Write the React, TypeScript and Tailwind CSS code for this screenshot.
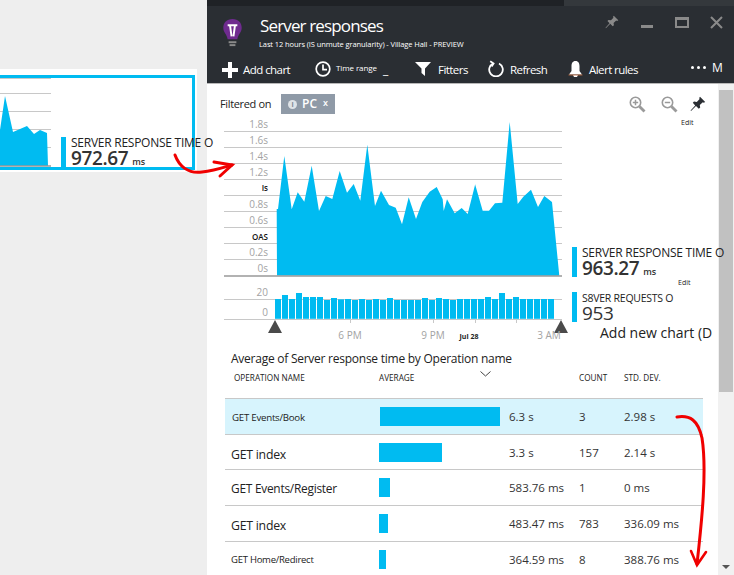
import React from "react";

const font = "font-['Open_Sans','Noto_Sans',sans-serif]";

const zoomA = [[185,297],[189,297],[208,138],[230,298],[248,247],[268,275],[290,167],[312,303],[332,258],[352,267],[374,183],[396,248],[416,222],[436,272],[457,104],[480,288],[498,242],[522,285],[542,293],[561,343],[581,262],[603,327],[622,276],[644,245],[665,231],[683,268],[686,303],[696,268],[719,310],[740,294],[758,312],[780,225]];
const zoomB = [[15,222],[38,302],[57,302],[75,280],[97,278],[119,36],[143,282],[160,260],[183,239],[204,291],[223,258],[246,276],[268,497]];
const areaPts = [
  "277,275.5",
  ...zoomA.map(([x, y]) => `${(215 + x / 3).toFixed(1)},${(110 + y / 3).toFixed(1)}`),
  ...zoomB.map(([x, y]) => `${(470 + x / 3).toFixed(1)},${(110 + y / 3).toFixed(1)}`),
].join(" ");

const barTops = [72,60,72,54,66,66,66,75,69,73,72,75,72,75,72,75,69,75,75,75,75,69,75,69,72,75,72,72,72,72,66,72,54,72,66,72,72,72,72,72];

const yLabels: [string, number, boolean][] = [
  ["1.8s", 125, false],["1.6s", 141, false],["1.4s", 157, false],["1.2s", 173, false],["Is", 189, true],
  ["0.8s", 205, false],["0.6s", 221, false],["OAS", 238, true],["0.2s", 253, false],["0s", 269, false],
];

function MainChart() {
  return (
    <svg width={350} height={230} viewBox="222 115 350 230" className="shrink-0 block">
      {[131,147,163,179,195,211,227,243,259].map((y) => (
        <line key={y} x1={224} x2={562} y1={y + 0.5} y2={y + 0.5} stroke="#c8c8c8" />
      ))}
      <polygon points={areaPts} fill="#00bbf1" />
      <line x1={224} x2={562} y1={276} y2={276} stroke="#999" strokeWidth={1.5} />
      {yLabels.map(([t, y, b]) => (
        <text key={t} x={268} y={y} textAnchor="end" dominantBaseline="middle" fontSize={b ? 8 : 10} fontWeight={b ? 600 : 400} fill={b ? "#111" : "#a3a3a3"} fontFamily="Open Sans">{t}</text>
      ))}
      <text x={268} y={293} textAnchor="end" dominantBaseline="middle" fontSize={10} fill="#a3a3a3" fontFamily="Open Sans">20</text>
      <text x={268} y={313} textAnchor="end" dominantBaseline="middle" fontSize={10} fill="#a3a3a3" fontFamily="Open Sans">0</text>
      <line x1={224} x2={562} y1={299.5} y2={299.5} stroke="#c8c8c8" />
      {barTops.map((t, i) => {
        const y = 275 + t / 3;
        return <rect key={i} x={275 + i * 7} y={y} width={6} height={318.8 - y} fill="#00bbf1" />;
      })}
      <line x1={224} x2={562} y1={319.5} y2={319.5} stroke="#c8c8c8" />
      {[350, 433, 475, 516].map((x) => (
        <line key={x} x1={x + 0.5} x2={x + 0.5} y1={319} y2={323} stroke="#c8c8c8" />
      ))}
      <polygon points="275,320 268,333 282,333" fill="#4a4a4a" />
      <polygon points="561,320 554,333 568,333" fill="#4a4a4a" />
      <text x={350} y={339} textAnchor="middle" fontSize={10} fill="#a3a3a3" fontFamily="Open Sans">6 PM</text>
      <text x={433} y={339} textAnchor="middle" fontSize={10} fill="#a3a3a3" fontFamily="Open Sans">9 PM</text>
      <text x={469} y={339} textAnchor="middle" fontSize={7} fontWeight={700} fill="#222" fontFamily="Open Sans">Jul 28</text>
      <text x={549} y={339} textAnchor="middle" fontSize={10} fill="#a3a3a3" fontFamily="Open Sans">3 AM</text>
    </svg>
  );
}

function MiniChart() {
  return (
    <svg width={52} height={89} viewBox="0 78 52 89" className="shrink-0 block">
      {[78,93,111,129,147].map((y) => (
        <line key={y} x1={0} x2={51} y1={y + 0.5} y2={y + 0.5} stroke="#c8c8c8" />
      ))}
      <polygon points="0,130 5,96 13,132 20,129 27,126 34,134 40,130 47,133 48,166 0,166" fill="#00bbf1" />
      <line x1={0} x2={51} y1={166} y2={166} stroke="#999" strokeWidth={1.5} />
    </svg>
  );
}

function PinIcon({ color, size = 16 }: { color: string; size?: number }) {
  return (
    <svg width={size} height={size} viewBox="0 0 16 16" fill={color} className="shrink-0">
      <path d="M10 0.8 L15.2 6 L13.8 6.8 L12.8 6.2 L9.8 9 L10.2 11.6 L8.8 12.8 L6 10 L1 15 L0.6 14.6 L5.2 9.4 L2.8 6.8 L4 5.6 L6.8 6 L9.6 3 L9.2 2 Z" />
    </svg>
  );
}

function ZoomIcon({ plus }: { plus: boolean }) {
  return (
    <svg width={17} height={17} viewBox="0 0 17 17" fill="none" stroke="#9a9a9a">
      <circle cx={6.5} cy={6.5} r={5.2} strokeWidth={1.6} />
      <path d="M10.5 10.5 L15.5 15.5" strokeWidth={2.8} />
      <path d={plus ? "M3.8 6.5H9.2M6.5 3.8V9.2" : "M3.8 6.5H9.2"} strokeWidth={1.5} />
    </svg>
  );
}

function Tool({ icon, label, className }: { icon: React.ReactNode; label: string; className: string }) {
  return (
    <div className={`flex items-center ${className}`}>
      {icon}
      <span className="text-white text-[11.5px] leading-none whitespace-nowrap tracking-[-0.55px]">{label}</span>
    </div>
  );
}

function Header() {
  return (
    <div className="h-[84px] shrink-0 bg-[#2a2e33] border-b border-[#b8b8b8] flex flex-col">
      <div className="h-[6px] flex">
        <div className="w-[357px] bg-[#1f2226]" />
        <div className="flex-1 bg-[#34383c]" />
      </div>
      <div className="h-[46px] flex">
        <div className="w-[53px] pl-[15px] pt-[12px]">
          <svg width={21} height={31} viewBox="0 0 21 32">
            <path d="M10.5 1 C4.5 1 1 5 1 10 C1 15 5 17 5.5 22 L15.5 22 C16 17 20 15 20 10 C20 5 16.5 1 10.5 1 Z" fill="#6f2b8f" />
            <path d="M5.5 7.5 H15.5 M8 8 L9.5 19 M13 8 L11.5 19" stroke="#fff" strokeWidth={2} fill="none" />
            <rect x={6.5} y={24} width={8} height={2} fill="#8a8a8a" />
            <rect x={7.5} y={27} width={6} height={2} fill="#8a8a8a" />
          </svg>
        </div>
        <div className="flex-1 pt-[9px]">
          <div className="text-white text-[17px] leading-[22px] tracking-[-0.85px] whitespace-nowrap">Server responses</div>
          <div className="text-white text-[7.5px] leading-[10px] mt-[2px] tracking-[-0.1px] whitespace-nowrap -ml-[1px]">
            Last 12 hours (IS unmute granularity) - Village Hall - PREVIEW
          </div>
        </div>
        <div className="flex items-start pt-[9px] pr-[11px]">
          <PinIcon color="#8a8a8a" size={14} />
          <div className="w-[12px] h-[3px] bg-[#8a8a8a] ml-[22px] mt-[10px]" />
          <div className="w-[14px] h-[11px] border-2 border-t-[3px] border-[#8a8a8a] ml-[22px] mt-[2px]" />
          <svg width={13} height={13} viewBox="0 0 13 13" className="ml-[21px] mt-[1px]" stroke="#8a8a8a" strokeWidth={2}>
            <path d="M1 1L12 12M12 1L1 12" />
          </svg>
        </div>
      </div>
      <div className="flex-1 flex items-center pt-[4px]">
        <Tool className="ml-[15px] w-[93px] gap-[5px]" label="Add chart" icon={
          <svg width={16} height={16} viewBox="0 0 16 16" fill="#fff"><path d="M6 0H10V6H16V10H10V16H6V10H0V6H6Z" /></svg>
        } />
        <div className="flex items-center w-[100px]">
          <svg width={16} height={16} viewBox="0 0 16 16" fill="none" stroke="#fff" strokeWidth={1.7} className="-mt-[2px]">
            <circle cx={8} cy={8} r={6.8} /><path d="M8 3.5V8.6H12" />
          </svg>
          <span className="text-white text-[8px] ml-[5px] -mt-[4px] whitespace-nowrap tracking-[-0.1px]">Time range</span>
          <span className="text-white text-[12px] ml-[6px] leading-none mt-[1px]">_</span>
        </div>
        <Tool className="w-[73px] gap-[7px]" label="Fitters" icon={
          <svg width={16} height={14} viewBox="0 0 16 14" fill="#fff" className="-mt-[2px]"><path d="M0 0H16L10 6.5V14L6.5 11V6.5Z" /></svg>
        } />
        <Tool className="w-[80px] gap-[6px]" label="Refresh" icon={
          <svg width={16} height={17} viewBox="0 0 16 17" fill="none" stroke="#fff" strokeWidth={1.8} className="-mt-[2px]">
            <path d="M5 3.5 A6.8 6.8 0 1 0 11 3.5" /><path d="M2.2 1.2 L5.6 3.4 L3.6 6.6" />
          </svg>
        } />
        <Tool className="w-[123px] gap-[6px]" label="Alert rules" icon={
          <svg width={15} height={16} viewBox="0 0 15 16" className="-mt-[2px]">
            <path d="M7.5 0 C4.5 0 3.5 2.5 3.5 5 L3.5 10 L1 13.5 L14 13.5 L11.5 10 L11.5 5 C11.5 2.5 10.5 0 7.5 0 Z M5 14 H10 L9 16 H6Z" fill="#fff" />
            <path d="M0.5 14 H14.5" stroke="#c8693a" strokeWidth={0.8} />
          </svg>
        } />
        <div className="flex items-center gap-[3px] -mt-[4px]">
          <span className="w-[3px] h-[3px] rounded-full bg-white" />
          <span className="w-[3px] h-[3px] rounded-full bg-white" />
          <span className="w-[3px] h-[3px] rounded-full bg-white" />
          <span className="text-white text-[12px] leading-none ml-[3px]">M</span>
        </div>
      </div>
    </div>
  );
}

function Legend({ title, value, unit, small }: { title: string; value: string; unit?: string; small?: boolean }) {
  return (
    <div className="flex h-[30px] gap-[5px]">
      <div className="w-[5px] bg-[#00bbf1] shrink-0" />
      <div className="flex flex-col whitespace-nowrap">
        <div className={`${small ? "text-[10.5px]" : "text-[12px]"} leading-[12px] tracking-[-0.25px] text-[#222]`}>{title}</div>
        <div className={`text-[19px] leading-[20px] ${small ? "font-normal" : "font-semibold"} text-[#333] -mt-[1px] tracking-[-0.4px]`}>
          {value}
          {unit && <span className="text-[9px] font-semibold ml-[4px] tracking-normal">{unit}</span>}
        </div>
      </div>
    </div>
  );
}

const rows = [
  { name: "GET Events/Book", w: 120, h: "h-[36px]", val: "6.3 s", count: "3", std: "2.98 s", cls: "text-[9.7px] pl-[7px] pt-[4px]", selected: true },
  { name: "GET index", w: 63, h: "h-[35px]", val: "3.3 s", count: "157", std: "2.14 s", cls: "text-[12.3px] pl-[6px] pt-[6px]" },
  { name: "GET Events/Register", w: 11, h: "h-[36px]", val: "583.76 ms", count: "1", std: "0 ms", cls: "text-[11.9px] pl-[6px] pt-[3px]" },
  { name: "GET index", w: 9, h: "h-[36px]", val: "483.47 ms", count: "783", std: "336.09 ms", cls: "text-[12.3px] pl-[6px] pt-[6px]" },
  { name: "GET Home/Redirect", w: 7, h: "h-[36px]", val: "364.59 ms", count: "8", std: "388.76 ms", cls: "text-[9.5px] pl-[6px] pt-[1px]" },
];

function Table() {
  return (
    <div className="ml-[18px] w-[478px] shrink-0">
      {rows.map((r, i) => (
        <div key={i} className={`${r.h} flex items-center border-b border-[#c8c8c8] whitespace-nowrap ${r.selected ? "bg-[#d7f4fd]" : "bg-white"}`}>
          <div className={`w-[154px] tracking-[-0.25px] text-[#222] ${r.cls}`}>{r.name}</div>
          <div className="w-[130px] h-[19px]">
            <div className={`h-[19px] bg-[#00bbf1] ${r.selected ? "ml-[1px]" : ""}`} style={{ width: r.w }} />
          </div>
          <div className="w-[70px] pt-[1px] text-[11.5px] text-[#333]">{r.val}</div>
          <div className="w-[45px] pt-[1px] text-[11.5px] text-[#333]">{r.count}</div>
          <div className="pt-[1px] text-[11.5px] text-[#333]">{r.std}</div>
        </div>
      ))}
    </div>
  );
}

function Blade() {
  return (
    <div className="w-[527px] h-[575px] flex flex-col shrink-0 overflow-hidden">
      <Header />
      <div className="flex-1 flex min-h-0">
        <div className="w-[511px] bg-white flex flex-col">
          <div className="h-[31px] shrink-0 flex items-start pt-[10px] relative z-10">
            <span className="ml-[13px] w-[61px] text-[11px] leading-[20px] text-[#222] tracking-[-0.35px] whitespace-nowrap">Filtered on</span>
            <div className="w-[54px] h-[20px] bg-[#8f9aa7] flex items-center text-white pl-[7px]">
              <span className="w-[9px] h-[9px] rounded-full bg-[#dfe3e7] text-[#7c8794] text-[7px] leading-[9px] text-center font-bold">i</span>
              <span className="text-[12px] font-semibold ml-[5px] leading-none">PC</span>
              <span className="text-[9px] font-semibold ml-[6px] leading-none -mt-[4px]">x</span>
            </div>
            <div className="ml-[294px] mt-[2px] flex items-start">
              <ZoomIcon plus />
              <div className="ml-[15px]"><ZoomIcon plus={false} /></div>
              <div className="ml-[12px] flex flex-col items-start w-[16px]">
                <PinIcon color="#2a2e33" />
                <span className="text-[7px] leading-[9px] mt-[6px] -ml-[9px] text-[#222]">Edit</span>
              </div>
            </div>
          </div>
          <div className="h-[230px] shrink-0 flex pl-[15px]">
            <MainChart />
            <div className="pt-[132px] flex flex-col relative z-10">
              <Legend title="SERVER RESPONSE TIME O" value="963.27" unit="ms" />
              <span className="text-[7px] leading-[9px] ml-[106px] mt-[1px] text-[#222]">Edit</span>
              <div className="mt-[5px]">
                <Legend title="S8VER REQUESTS O" value="953" small />
              </div>
              <span className="text-[14px] leading-[18px] ml-[28px] mt-[2px] whitespace-nowrap text-[#222]">Add new chart (D</span>
            </div>
          </div>
          <div className="ml-[24px] mt-[6px] h-[16px] shrink-0 text-[12px] leading-[16px] text-[#222] whitespace-nowrap tracking-[-0.25px]">
            Average of Server response time by Operation name
          </div>
          <div className="flex items-center shrink-0 h-[16px] mt-[3px] ml-[18px] text-[8.2px] text-[#222] whitespace-nowrap">
            <span className="w-[154px] pl-[9px]">OPERATION NAME</span>
            <span className="w-[100px]">AVERAGE</span>
            <svg width={11} height={6} viewBox="0 0 11 6" fill="none" stroke="#444" className="-mt-[9px] ml-[1px] mr-[88px]"><path d="M0.5 0.5L5.5 5L10.5 0.5" /></svg>
            <span className="w-[45px]">COUNT</span>
            <span>STD. DEV.</span>
          </div>
          <div className="h-[12px] shrink-0" />
          <div className="ml-[18px] w-[478px] border-t border-[#c8c8c8] shrink-0" />
          <Table />
        </div>
        <div className="w-[16px] bg-[#f1f1f1] flex flex-col items-center">
          <div className="h-[6px]" />
          <div className="w-[14px] h-[302px] bg-[#c1c1c1]" />
          <div className="flex-1" />
          <div className="w-0 h-0 border-l-[4px] border-r-[4px] border-t-[4px] border-l-transparent border-r-transparent border-t-[#555] mb-[6px]" />
        </div>
      </div>
    </div>
  );
}

export default function App() {
  return (
    <div className={`relative w-[734px] h-[575px] overflow-hidden bg-[#eeeeee] flex ${font}`}>
      <div className="w-[207px] shrink-0 pt-[69px] relative z-10">
        <div className="w-[197px] h-[103px] bg-white pt-[6px] pr-[2px]">
          <div className="h-[95px] border-y-[3px] border-r-[3px] border-[#00bbf1] flex items-end">
            <MiniChart />
            <div className="ml-[9px] shrink-0">
              <Legend title="SERVER RESPONSE TIME O" value="972.67" unit="ms" />
            </div>
          </div>
        </div>
      </div>
      <Blade />
      <svg className="absolute left-0 top-0 z-20 pointer-events-none" width={734} height={575} viewBox="0 0 734 575" fill="none" stroke="#f00000" strokeLinecap="round">
        <path d="M175 155 C179 166 188 174 202 172 C213 171 222 168 232 165" strokeWidth={3} />
        <path d="M214 162 L232 165 L220 176" strokeWidth={3} />
        <path d="M677 417 C690 415 698 420 702 438 C707 470 702 520 697 564" strokeWidth={3} />
        <path d="M691 551 L697 565 L706 552" strokeWidth={2.6} />
      </svg>
    </div>
  );
}
